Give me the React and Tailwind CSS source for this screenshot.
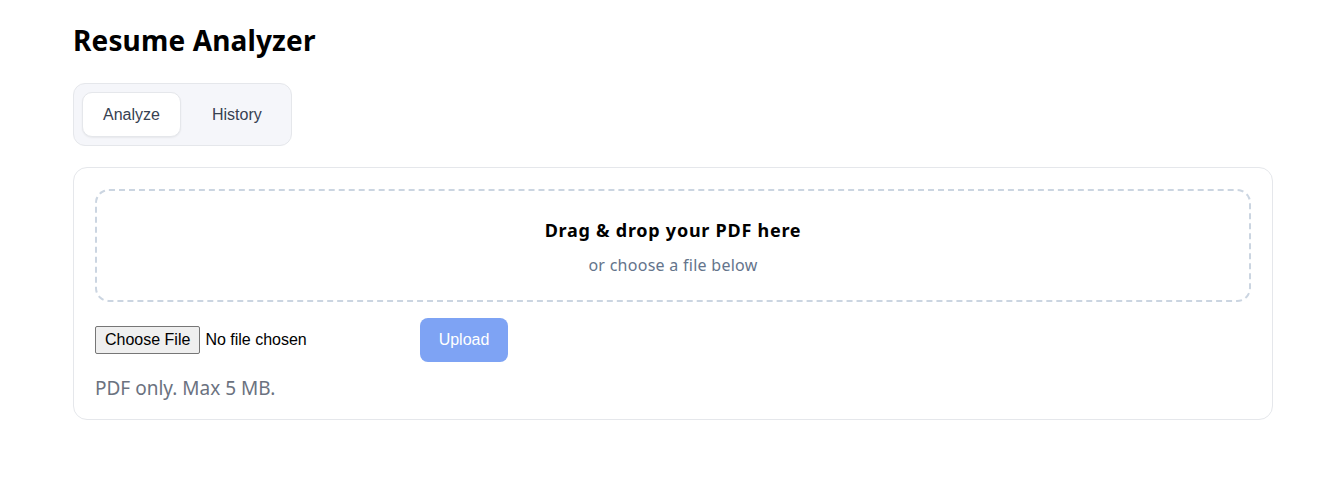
import React, { useState } from 'react'

const body = { fontFamily: '"Noto Sans", "Open Sans", sans-serif' }

export default function App(){
  const [tab, setTab] = useState('analyze')

  return (
    <div className="min-h-[485px] bg-white text-black" style={body}>
      <div className="w-[1200px] ml-[73px] pt-[22px]">
        <h1 className="text-[28px] leading-[36px] font-bold tracking-[0.15px]">Resume Analyzer</h1>

        <div className="mt-[25px] inline-flex gap-[10px] p-[8px] rounded-[12px] border border-[#e5e7eb] bg-[#f5f6fa] font-['Liberation_Sans',Arial,sans-serif]">
          {[['analyze','Analyze'],['history','History']].map(([k,label]) => (
            <button
              key={k}
              onClick={()=>setTab(k)}
              className={tab===k
                ? 'h-[45px] px-[20px] rounded-[10px] bg-white border border-[#e5e7eb] shadow-[0_1px_2px_rgba(0,0,0,0.06)] text-[16px] text-[#374151]'
                : 'h-[45px] px-[20px] rounded-[10px] border border-transparent text-[16px] text-[#374151]'}
            >{label}</button>
          ))}
        </div>

        <div className="mt-[21px] rounded-[14px] border border-[#e5e7eb] bg-white p-[21px] pb-[19px]">
          <div className="h-[113px] rounded-[14px] border-2 border-dashed border-[#cbd5e1] flex flex-col items-center justify-center">
            <div className="text-[18px] font-bold leading-[24px] tracking-[0.75px] mt-[3px]">Drag &amp; drop your PDF here</div>
            <div className="text-[16px] text-[#64748b] leading-[22px] tracking-[0.27px] mt-[12px]">or choose a file below</div>
          </div>

          <div className="mt-[16px] flex items-center gap-[12px]">
            <input
              type="file"
              accept="application/pdf"
              className="w-[313px] text-[16px] text-black font-['Liberation_Sans',Arial,sans-serif] file:mr-[5px] file:px-[9px] file:py-[1px] file:border file:border-[#767676] file:rounded-[2px] file:bg-[#efefef] file:text-[16px] file:text-black file:font-['Liberation_Sans',Arial,sans-serif]"
            />
            <button disabled className="h-[44px] w-[88px] rounded-[8px] bg-[#7ea3f4] text-white text-[16px] font-['Liberation_Sans',Arial,sans-serif]">Upload</button>
          </div>

          <div className="mt-[14px] text-[19px] leading-[24px] text-[#6b7280]">PDF only. Max 5 MB.</div>
        </div>
      </div>
    </div>
  )
}
